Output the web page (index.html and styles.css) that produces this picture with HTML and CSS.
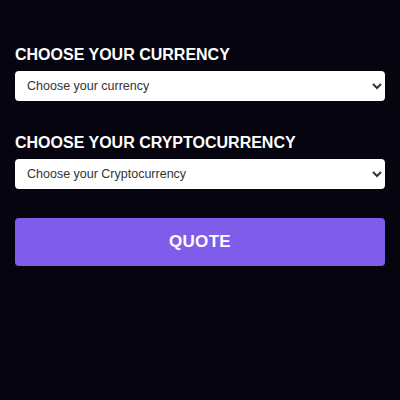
FILE: index.html
```html
<!DOCTYPE html>
<html>
<head>
<meta charset="utf-8">
<link rel="stylesheet" href="styles.css">
</head>
<body>
<form class="form">
  <div class="field">
    <label class="label">Choose your currency</label>
    <select class="select"><option>Choose your currency</option></select>
  </div>
  <div class="field">
    <label class="label">Choose your Cryptocurrency</label>
    <select class="select"><option>Choose your Cryptocurrency</option></select>
  </div>
  <button type="button" class="btn">Quote</button>
</form>
</body>
</html>
```
FILE: styles.css
```css
html, body {
  margin: 0;
  height: 100%;
  background: #06040f;
}
.form {
  padding: 45px 15px 0;
  display: flex;
  flex-direction: column;
  font-family: "Liberation Sans", Arial, sans-serif;
}
.field {
  display: flex;
  flex-direction: column;
  margin-bottom: 32px;
}
.field:last-of-type {
  margin-bottom: 29px;
}
.label {
  color: #fff;
  font-weight: 700;
  font-size: 16px;
  text-transform: uppercase;
  line-height: 20px;
  margin-bottom: 6px;
}
.select {
  height: 30px;
  width: 100%;
  border: none;
  border-radius: 4px;
  background: #fff;
  font-family: "Liberation Sans", Arial, sans-serif;
  font-size: 12.5px;
  color: #333;
  padding: 0 8px;
}
.btn {
  height: 48px;
  border: none;
  border-radius: 4px;
  background: #7f5cea;
  color: #fff;
  font-family: "Liberation Sans", Arial, sans-serif;
  font-weight: 700;
  font-size: 17px;
  letter-spacing: 0.3px;
  text-transform: uppercase;
}
```
